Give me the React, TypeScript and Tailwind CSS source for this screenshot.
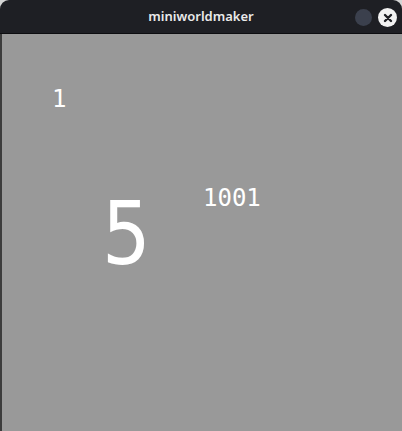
import React from 'react';

const TitleBar: React.FC = () => (
  <div className="relative flex h-[34px] items-center justify-center rounded-t-[9px] border-b border-[#0d0d10] bg-[#1e1f24]">
    <span className="font-['Noto_Sans',sans-serif] text-[13px] font-semibold text-[#eaeaea]">miniworldmaker</span>
    <div className="absolute right-[5px] top-[8px] flex items-center gap-[6px]">
      <span className="h-[17px] w-[17px] rounded-full bg-[#3b404d]" />
      <span className="flex h-[19px] w-[19px] items-center justify-center rounded-full bg-[#f2f2f2]">
        <svg width="10" height="10" viewBox="0 0 10 10">
          <path d="M2 2L8 8M8 2L2 8" stroke="#1e1f24" strokeWidth="2.4" strokeLinecap="round" />
        </svg>
      </span>
    </div>
  </div>
);

export default function App() {
  return (
    <div className="h-[431px] w-[402px] overflow-hidden bg-[#d4d4d4]">
      <TitleBar />
      {/* canvas: text tokens sit at their drawn coordinates */}
      <div className="relative h-[397px] border-l-2 border-[#3c3c3c] bg-[#999999] text-white">
        <span className="absolute left-[50px] top-[53px] font-['DejaVu_Sans_Mono',monospace] text-[24px] leading-none">1</span>
        <span className="absolute left-[201px] top-[152px] font-['DejaVu_Sans_Mono',monospace] text-[24px] leading-none">1001</span>
        <span className="absolute left-[100px] top-[156px] origin-left scale-x-[0.87] font-['DejaVu_Sans',sans-serif] text-[88px] leading-none">5</span>
      </div>
    </div>
  );
}
